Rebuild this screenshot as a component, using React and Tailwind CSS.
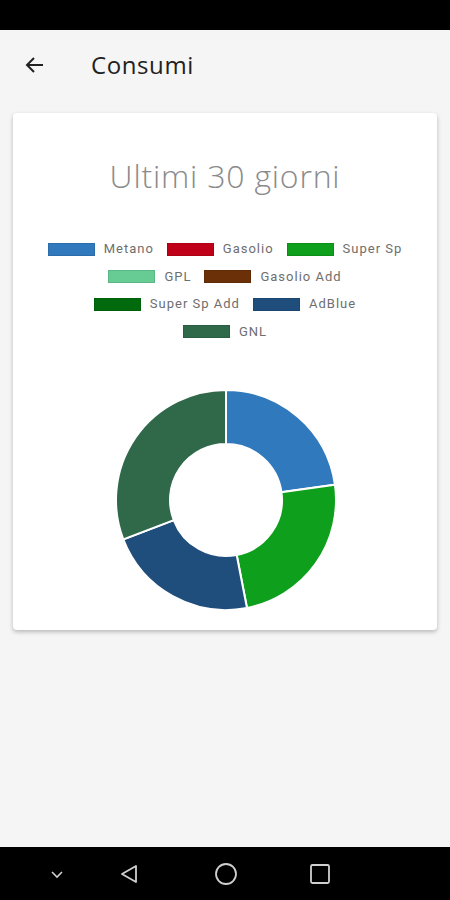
import React from 'react';

const legendRows = [
    [
        { name: 'Metano', color: '#3179bd' },
        { name: 'Gasolio', color: '#c00018' },
        { name: 'Super Sp', color: '#0e9f1c' },
    ],
    [
        { name: 'GPL', color: '#66cc93' },
        { name: 'Gasolio Add', color: '#6b3008' },
    ],
    [
        { name: 'Super Sp Add', color: '#006a0c' },
        { name: 'AdBlue', color: '#1f4e7d' },
    ],
    [{ name: 'GNL', color: '#30684a' }],
];

// rough shares read off the chart
const slices = [
    { value: 82, color: '#3179bd' },
    { value: 87, color: '#0e9f1c' },
    { value: 80, color: '#1f4e7d' },
    { value: 111, color: '#30684a' },
];

function Donut() {
    const cx = 112, cy = 112, R = 110, r = 56;
    const total = slices.reduce((s, x) => s + x.value, 0);
    let start = 0;
    const pt = (rad, a) => [cx + rad * Math.sin(a), cy - rad * Math.cos(a)];
    return (
        <svg width="224" height="224" viewBox="0 0 224 224">
            {slices.map((s, i) => {
                const a0 = (start / total) * Math.PI * 2;
                start += s.value;
                const a1 = (start / total) * Math.PI * 2;
                const large = a1 - a0 > Math.PI ? 1 : 0;
                const [x0, y0] = pt(R, a0);
                const [x1, y1] = pt(R, a1);
                const [x2, y2] = pt(r, a1);
                const [x3, y3] = pt(r, a0);
                const d = `M${x0} ${y0} A${R} ${R} 0 ${large} 1 ${x1} ${y1} L${x2} ${y2} A${r} ${r} 0 ${large} 0 ${x3} ${y3} Z`;
                return <path key={i} d={d} fill={s.color} stroke="#ffffff" strokeWidth="2" />;
            })}
        </svg>
    );
}

function App() {
    return (
        <div className="w-[450px] h-[900px] flex flex-col bg-[#f5f5f5] font-['Roboto','Liberation_Sans',sans-serif]">
            <div className="h-[30px] bg-black shrink-0" />
            <div className="h-[70px] flex items-center shrink-0">
                <svg className="ml-[23px]" width="24" height="24" viewBox="0 0 24 24">
                    <path d="M20 12H5M11 5l-7 7 7 7" fill="none" stroke="#212121" strokeWidth="2" />
                </svg>
                <span className="ml-[44px] text-[24px] text-[#212121] font-['Open_Sans',sans-serif] tracking-[0.6px]">Consumi</span>
            </div>
            <div className="mx-[13px] mt-[13px] h-[517px] bg-white rounded-[4px] shadow-[0_2px_4px_rgba(0,0,0,0.25)] flex flex-col items-center">
                <div className="mt-[41px] text-[32px] leading-[44px] text-[#8a8a8a] font-['Open_Sans',sans-serif] font-light tracking-[0.8px]">Ultimi 30 giorni</div>
                <div className="mt-[44px] flex flex-col items-center">
                    {legendRows.map((row, i) => (
                        <div key={i} className="h-[27.5px] flex items-start gap-[13px]">
                            {row.map(item => (
                                <div key={item.name} className="flex items-center gap-[9px] h-[14px]">
                                    <span className="w-[47px] h-[13px] border border-black/10" style={{ backgroundColor: item.color }} />
                                    <span className="text-[13px] text-[#6e6e6e] tracking-[1px]">{item.name}</span>
                                </div>
                            ))}
                        </div>
                    ))}
                </div>
                <div className="mt-[36px] ml-[2px]">
                    <Donut />
                </div>
            </div>
            <div className="flex-1" />
            <div className="h-[53px] bg-black shrink-0 flex items-center">
                <svg className="ml-[49px]" width="16" height="10" viewBox="0 0 16 10">
                    <path d="M3 3l5 5 5-5" fill="none" stroke="#cfcfcf" strokeWidth="1.6" />
                </svg>
                <svg className="ml-[54px]" width="20" height="22" viewBox="0 0 20 22">
                    <path d="M17 3v16L3 11z" fill="none" stroke="#cfcfcf" strokeWidth="1.8" strokeLinejoin="round" />
                </svg>
                <svg className="ml-[75px]" width="24" height="24" viewBox="0 0 24 24">
                    <circle cx="12" cy="12" r="10" fill="none" stroke="#cfcfcf" strokeWidth="1.8" />
                </svg>
                <svg className="ml-[71px]" width="22" height="22" viewBox="0 0 22 22">
                    <rect x="2" y="2" width="18" height="18" rx="1.5" fill="none" stroke="#cfcfcf" strokeWidth="1.8" />
                </svg>
            </div>
        </div>
    );
}

export default App;
